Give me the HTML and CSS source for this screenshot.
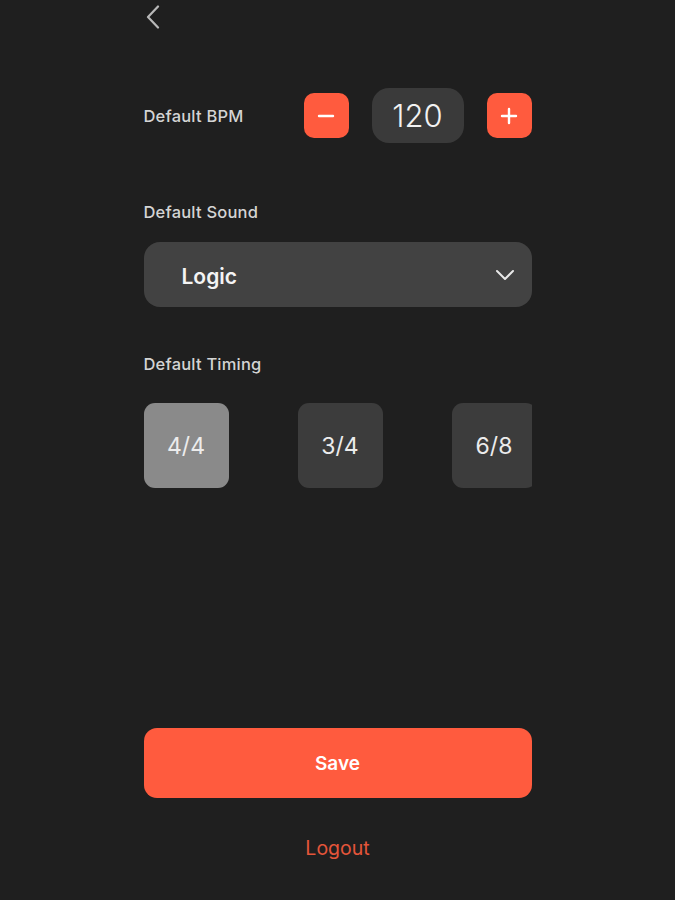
FILE: index.html
```html
<!DOCTYPE html>
<html lang="en">
<head>
    <meta charset="UTF-8">
    <meta name="viewport" content="width=device-width, initial-scale=1.0">
    <title>Settings</title>
    <link rel="stylesheet" href="styles.css">
</head>

<body>
    <div class="screen">
        <!-- back -->
        <button class="back-btn" aria-label="Back">
            <svg width="16" height="24" viewBox="0 0 16 24">
                <path d="M13 1.5 L3 12 L13 22.5" fill="none" stroke="#b8b8b8" stroke-width="2.2" stroke-linecap="round" stroke-linejoin="round"/>
            </svg>
        </button>

        <!-- BPM -->
        <div class="bpm-row">
            <span class="label">Default BPM</span>
            <div class="bpm-controls">
                <button class="step-btn" aria-label="Decrease">
                    <svg width="18" height="18" viewBox="0 0 18 18"><path d="M2 9 H16" stroke="#fff" stroke-width="2.4" stroke-linecap="round"/></svg>
                </button>
                <div class="bpm-value">120</div>
                <button class="step-btn" aria-label="Increase">
                    <svg width="18" height="18" viewBox="0 0 18 18"><path d="M2 9 H16 M9 2 V16" stroke="#fff" stroke-width="2.4" stroke-linecap="round"/></svg>
                </button>
            </div>
        </div>

        <!-- sound -->
        <p class="label section-label">Default Sound</p>
        <div class="select">
            <span>Logic</span>
            <svg width="20" height="12" viewBox="0 0 20 12">
                <path d="M2 2 L10 10 L18 2" fill="none" stroke="#e8e8e8" stroke-width="2" stroke-linecap="round" stroke-linejoin="round"/>
            </svg>
        </div>

        <!-- timing -->
        <p class="label section-label timing-label">Default Timing</p>
        <div class="timing-list">
            <div class="timing active">4/4</div>
            <div class="timing">3/4</div>
            <div class="timing">6/8</div>
        </div>

        <button class="save-btn">Save</button>
        <a class="logout" href="#">Logout</a>
    </div>
</body>
</html>
```

FILE: styles.css
```css
/* reset */
* {
    margin: 0;
    padding: 0;
    box-sizing: border-box;
}

body {
    font-family: Inter, 'Noto Sans', sans-serif;
    background: #1f1f1f;
    color: #d6d6d6;
}

button {
    border: none;
    background: none;
    font-family: inherit;
    cursor: pointer;
}

.screen {
    width: 388px;
    margin: 0 auto;
    padding-top: 5px;
    display: flex;
    flex-direction: column;
}

.back-btn {
    width: 16px;
    height: 24px;
    margin-left: 1px;
    display: block;
}

.back-btn svg {
    display: block;
}

/* labels */
.label {
    font-size: 16.5px;
    line-height: 20px;
    font-weight: 500;
    color: #d4d4d4;
    letter-spacing: 0.2px;
}

.section-label {
    margin-top: 59px;
}

.timing-label {
    margin-top: 47px;
}

/* bpm row */
.bpm-row {
    margin-top: 59px;
    height: 55px;
    display: flex;
    align-items: center;
    justify-content: space-between;
}

.bpm-controls {
    display: flex;
    align-items: center;
    gap: 23px;
}

.step-btn {
    width: 45px;
    height: 45px;
    border-radius: 10px;
    background: #ff5b3e;
    display: flex;
    align-items: center;
    justify-content: center;
}

.bpm-value {
    width: 92px;
    height: 55px;
    border-radius: 17px;
    background: #3a3a3a;
    color: #f2f2f2;
    font-size: 31px;
    font-weight: 300;
    display: flex;
    align-items: center;
    justify-content: center;
}

/* dropdown */
.select {
    margin-top: 20px;
    height: 65px;
    border-radius: 16px;
    background: #424242;
    padding: 0 17px 0 38px;
    display: flex;
    align-items: center;
    justify-content: space-between;
}

.select span {
    font-size: 21px;
    font-weight: 600;
    color: #f4f4f4;
    padding-top: 3px;
}

/* time signatures */
.timing-list {
    margin-top: 29px;
    display: flex;
    gap: 69px;
    overflow: hidden;
}

.timing {
    flex: 0 0 85px;
    height: 85px;
    border-radius: 11px;
    background: #3c3c3c;
    color: #ececec;
    font-size: 23px;
    display: flex;
    align-items: center;
    justify-content: center;
}

.timing.active {
    background: #8a8a8a;
}

/* bottom actions */
.save-btn {
    margin-top: 240px;
    height: 70px;
    border-radius: 13px;
    background: #ff5b3e;
    color: #fff;
    font-size: 19px;
    font-weight: 600;
}

.logout {
    margin-top: 38px;
    text-align: center;
    font-size: 19.5px;
    line-height: 24px;
    color: #e4553a;
    text-decoration: none;
}
```
